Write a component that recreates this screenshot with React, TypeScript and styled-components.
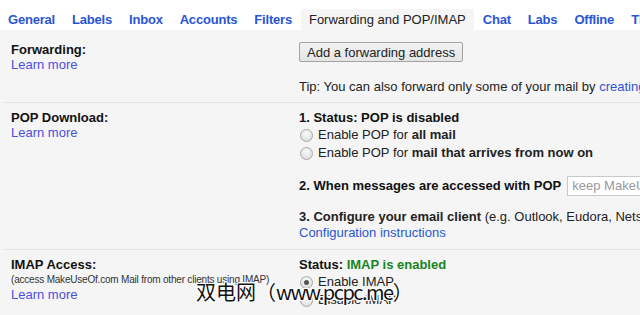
import styled, { createGlobalStyle } from 'styled-components';

const GlobalStyle = createGlobalStyle`
  body {
    margin: 0;
    background: #f5f5f5;
    font-family: "Liberation Sans", Arial, sans-serif;
    font-size: 13px;
    color: #222;
    overflow: hidden;
  }
`;

const Page = styled.div`
  position: relative;
  width: 640px;
  height: 315px;
  overflow: hidden;
`;

const TabBar = styled.div`
  display: flex;
  align-items: flex-end;
  height: 30px;
  background: #fff;
  white-space: nowrap;
  overflow: hidden;
`;

const Tab = styled.div<{ $active?: boolean }>`
  flex: none;
  height: 21px;
  line-height: 21px;
  padding: 0 8px;
  margin-right: 1px;
  font-weight: ${(p) => (p.$active ? 'normal' : 'bold')};
  letter-spacing: ${(p) => (p.$active ? '0' : '-0.2px')};
  color: ${(p) => (p.$active ? '#222' : '#2a55d4')};
  background: ${(p) => (p.$active ? '#f5f5f5' : 'transparent')};
`;

const Content = styled.div`
  padding-top: 5px;
`;

const Section = styled.div<{ $pb: number }>`
  display: grid;
  grid-template-columns: 288px 1fr;
  margin-left: 3px;
  padding: 7px 0 ${(p) => p.$pb}px 8px;
  border-bottom: 1px solid #e3e3e3;
  white-space: nowrap;
`;

const Left = styled.div`
  line-height: 15px;
`;

const Label = styled.div`
  font-weight: bold;
  color: #111;
`;

const Note = styled.div`
  font-size: 10px;
  line-height: 15px;
  color: #333;
  letter-spacing: -0.2px;
`;

const Link = styled.a`
  color: #2a55d4;
  text-decoration: none;
  cursor: pointer;
`;

const LearnLink = styled(Link)`
  color: #4a4fdc;
  display: block;
`;

const Right = styled.div`
  line-height: 16px;
  overflow: hidden;
`;

const Button = styled.button`
  display: block;
  height: 20px;
  padding: 0 7px;
  font-family: inherit;
  font-size: 13px;
  color: #222;
  background: linear-gradient(#f3f3f3, #e4e4e4);
  border: 1px solid #a3a3a3;
  border-radius: 2px;
`;

const Tip = styled.div`
  margin-top: 17px;
`;

const Heading = styled.div`
  font-weight: bold;
  color: #111;
`;

const Step = styled.div<{ $mt: number }>`
  margin-top: ${(p) => p.$mt}px;
  display: flex;
  align-items: center;
`;

const Green = styled.span`
  color: #18841f;
`;

const RadioRow = styled.div`
  display: flex;
  align-items: center;
  height: 18px;
`;

const Radio = styled.span<{ $checked?: boolean }>`
  flex: none;
  box-sizing: border-box;
  width: 13px;
  height: 13px;
  margin: 0 5px 0 1px;
  border-radius: 50%;
  border: 1px solid #a9a9a9;
  background: radial-gradient(circle at 50% 35%, #fbfbfb, #d6d6d6);
  position: relative;

  &::after {
    content: '';
    display: ${(p) => (p.$checked ? 'block' : 'none')};
    position: absolute;
    left: 3px;
    top: 3px;
    width: 5px;
    height: 5px;
    border-radius: 50%;
    background: #555;
  }
`;

const SelectBox = styled.div`
  flex: none;
  box-sizing: border-box;
  width: 120px;
  height: 20px;
  line-height: 18px;
  margin-left: 6px;
  padding: 0 4px;
  border: 1px solid #c9c9c9;
  background: #fff;
  color: #999;
  overflow: hidden;
`;

const Watermark = styled.div`
  position: absolute;
  left: 196px;
  top: 279px;
  font-family: "Noto Sans CJK SC", sans-serif;
  font-size: 20px;
  line-height: 26px;
  color: #111;
  white-space: nowrap;
  text-shadow: 1px 1px 0 #fff, -1px -1px 0 #fff, 1px -1px 0 #fff, -1px 1px 0 #fff,
    0 1px 0 #fff, 0 -1px 0 #fff, 1px 0 0 #fff, -1px 0 0 #fff;
`;

const WatermarkLatin = styled.span`
  letter-spacing: -1.5px;
`;

const tabs = ['General', 'Labels', 'Inbox', 'Accounts', 'Filters', 'Forwarding and POP/IMAP', 'Chat', 'Labs', 'Offline', 'Themes'];

export default function App() {
  return (
    <Page>
      <GlobalStyle />
      <TabBar>
        {tabs.map((t) => (
          <Tab key={t} $active={t === 'Forwarding and POP/IMAP'}>
            {t}
          </Tab>
        ))}
      </TabBar>
      <Content>
        <Section $pb={7}>
          <Left>
            <Label>Forwarding:</Label>
            <LearnLink>Learn more</LearnLink>
          </Left>
          <Right>
            <Button>Add a forwarding address</Button>
            <Tip>
              Tip: You can also forward only some of your mail by <Link>creating a filter!</Link>
            </Tip>
          </Right>
        </Section>
        <Section $pb={8}>
          <Left>
            <Label>POP Download:</Label>
            <LearnLink>Learn more</LearnLink>
          </Left>
          <Right>
            <Heading>1. Status: POP is disabled</Heading>
            <RadioRow>
              <Radio />
              Enable POP for&nbsp;<b>all mail</b>
            </RadioRow>
            <RadioRow>
              <Radio />
              Enable POP for&nbsp;<b>mail that arrives from now on</b>
            </RadioRow>
            <Step $mt={14}>
              <Heading>2. When messages are accessed with POP</Heading>
              <SelectBox>keep MakeUseOf.com Mail's copy</SelectBox>
            </Step>
            <Step $mt={13}>
              <span>
                <b>3. Configure your email client</b> (e.g. Outlook, Eudora, Netscape Mail)
              </span>
            </Step>
            <Link>Configuration instructions</Link>
          </Right>
        </Section>
        <Section $pb={8}>
          <Left>
            <Label>IMAP Access:</Label>
            <Note>(access MakeUseOf.com Mail from other clients using IMAP)</Note>
            <LearnLink>Learn more</LearnLink>
          </Left>
          <Right>
            <Heading>
              Status: <Green>IMAP is enabled</Green>
            </Heading>
            <RadioRow>
              <Radio $checked />
              Enable IMAP
            </RadioRow>
            <RadioRow>
              <Radio />
              Disable IMAP
            </RadioRow>
          </Right>
        </Section>
      </Content>
      <Watermark>
        双电网（<WatermarkLatin>www.pcpc.me</WatermarkLatin>）
      </Watermark>
    </Page>
  );
}
